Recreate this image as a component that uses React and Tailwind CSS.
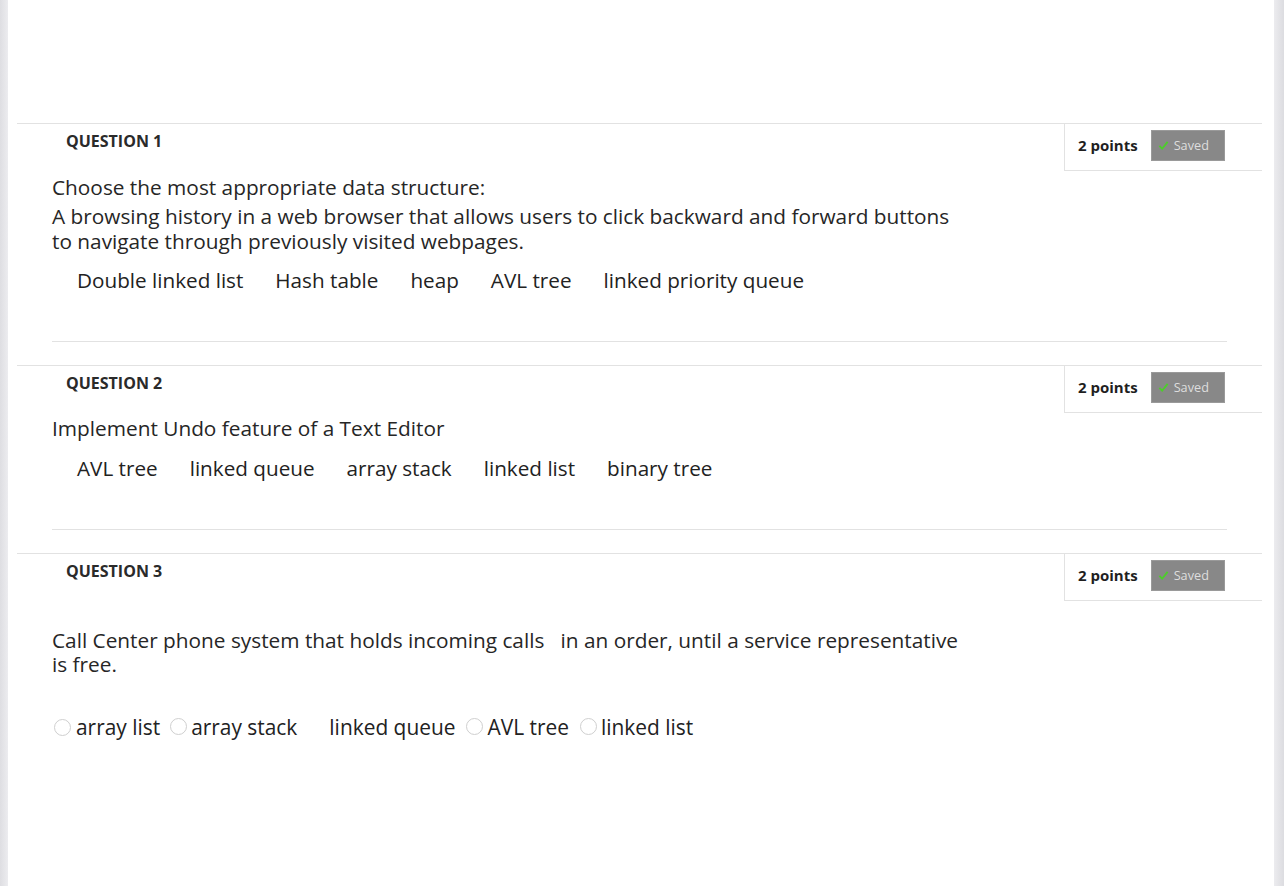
import React from "react";

const font = { fontFamily: '"Open Sans", "Noto Sans", sans-serif' };

function Header({ n }) {
  return (
    <div className="ml-[9px] mr-[12px] flex h-[47px] justify-between border-t border-[#e2e2e2]">
      <div className="pl-[49px] pt-[6px] text-[16px] font-bold leading-[22px] text-[#2a2a2a]">
        QUESTION {n}
      </div>
      <div className="flex h-[47px] w-[198px] items-start gap-[13px] border-b border-l border-[#e2e2e2] pl-[13px] pt-[6px]">
        <span className="mt-[4px] text-[15px] font-bold leading-[22px] text-[#1f1f1f]">2 points</span>
        <span className="flex h-[31px] w-[74px] items-center gap-[5px] border border-[#9a9a9a] bg-[#888888] pl-[6px] text-[12.7px] leading-none text-[#dedede]">
          <svg width="11" height="11" viewBox="0 0 12 12">
            <path d="M1.5 6.5 L4.5 9.5 L10.5 2" fill="none" stroke="#4ccf2a" strokeWidth="2" />
          </svg>
          Saved
        </span>
      </div>
    </div>
  );
}

function Radio() {
  return <span className="inline-block h-[17px] w-[17px] rounded-full border border-[#cfcfcf] bg-white" />;
}

export default function App() {
  return (
    <div style={font} className="flex h-[886px] w-[1284px] overflow-hidden bg-white text-[#262626]">
      <div className="h-full w-[8px] bg-gradient-to-r from-[#dedee2] to-[#ececef]" />
      <div className="flex-1 pt-[123px]">
        {/* Question 1 */}
        <Header n={1} />
        <div className="pl-[44px] text-[20.8px] leading-[25px]">
          <p className="mt-[4.5px]">Choose the most appropriate data structure:</p>
          <p className="mt-[4px]">
            A browsing history in a web browser that allows users to click backward and forward buttons
            <br />
            to navigate through previously visited webpages.
          </p>
          <div className="mt-[14px] flex gap-8 pl-[25px] text-[20.7px] text-[#222]">
            <span>Double linked list</span>
            <span>Hash table</span>
            <span>heap</span>
            <span>AVL tree</span>
            <span>linked priority queue</span>
          </div>
        </div>
        <div className="ml-[44px] mr-[47px] mt-[48px] border-t border-[#e2e2e2]" />
        <div className="h-[23px]" />

        {/* Question 2 */}
        <Header n={2} />
        <div className="pl-[44px] text-[20.8px] leading-[25px]">
          <p className="mt-[4px]">Implement Undo feature of a Text Editor</p>
          <div className="mt-[15px] flex gap-8 pl-[25px] text-[20.7px] text-[#222]">
            <span>AVL tree</span>
            <span>linked queue</span>
            <span>array stack</span>
            <span>linked list</span>
            <span>binary tree</span>
          </div>
        </div>
        <div className="ml-[44px] mr-[47px] mt-[48px] border-t border-[#e2e2e2]" />
        <div className="h-[23px]" />

        {/* Question 3 */}
        <Header n={3} />
        <div className="pl-[44px] text-[20.8px] leading-[25px]">
          <p className="mt-[28px] leading-[24px]">
            Call Center phone system that holds incoming calls&nbsp;&nbsp; in an order, until a service representative
            <br />
            is free.
          </p>
          <div className="mt-[39px] flex items-center pl-[2px] text-[20.9px] text-[#222]">
            <Radio />
            <span className="ml-[5px]">array list</span>
            <span className="ml-[10px]"><Radio /></span>
            <span className="ml-[4px]">array stack</span>
            <span className="ml-[32px]">linked queue</span>
            <span className="ml-[11px]"><Radio /></span>
            <span className="ml-[4px]">AVL tree</span>
            <span className="ml-[11px]"><Radio /></span>
            <span className="ml-[4px]">linked list</span>
          </div>
        </div>
      </div>
      <div className="h-full w-[10px] bg-gradient-to-r from-[#ececef] to-[#dcdce0]" />
    </div>
  );
}
